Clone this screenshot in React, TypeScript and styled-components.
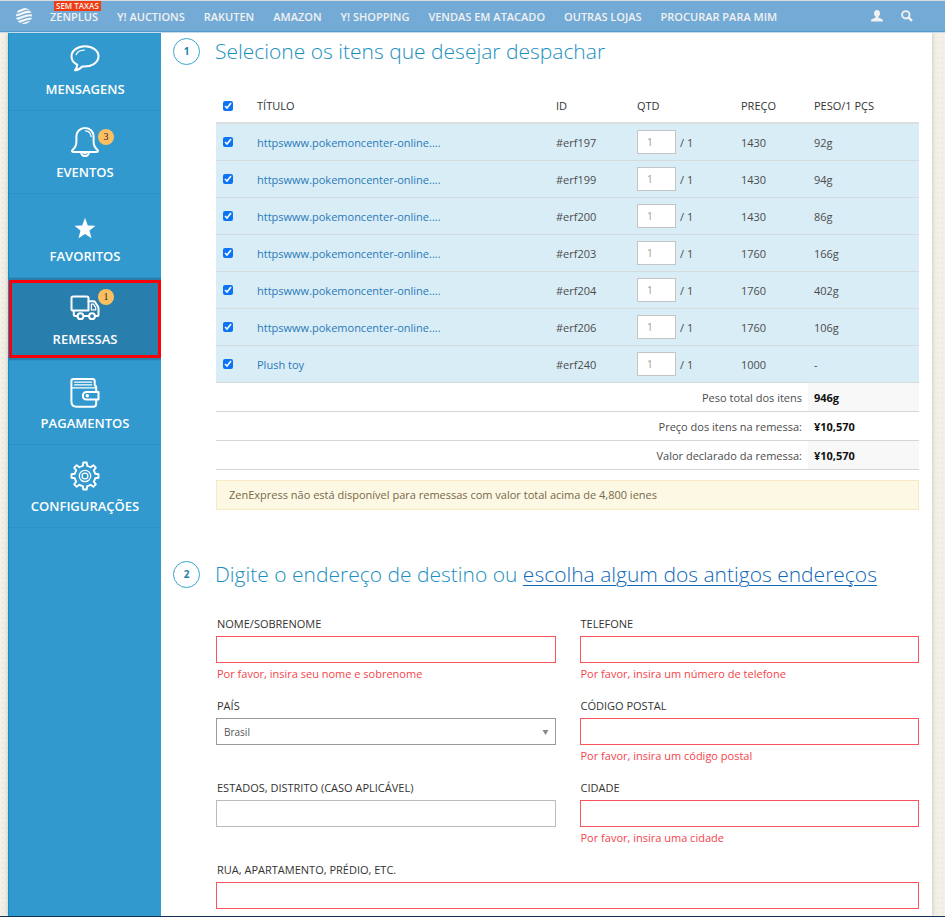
import React from 'react';
import styled, { createGlobalStyle } from 'styled-components';

const GlobalStyle = createGlobalStyle`
  *, *::before, *::after { box-sizing: border-box; }
  body {
    margin: 0;
    font-family: "Open Sans", "Noto Sans", sans-serif;
    font-size: 11px;
    color: #4c4c4c;
    background-color: #f3f0e8;
    background-image: radial-gradient(#ece8de 1px, transparent 1px);
    background-size: 5px 5px;
  }
  a { text-decoration: none; color: inherit; }
`;

const Page = styled.div`
  display: flex;
  flex-direction: column;
  min-height: 100vh;
  border-bottom: 1px solid #16365c;
`;

const TopBar = styled.header`
  position: relative;
  z-index: 2;
  display: flex;
  align-items: center;
  height: 32px;
  padding: 0 32px 0 16px;
  background: #74abd6;
  border-top: 1px solid #d9dadb;
  border-bottom: 1px solid #569acd;
  box-shadow: 0 1px 0 #c3dbee;
  color: #f1f1f1;
`;

const Logo = styled.a`
  display: flex;
  width: 34px;
`;

const TopLinks = styled.nav`
  display: flex;
  flex: 1;
  gap: 19px;
  padding-top: 2px;
  font-weight: 600;
  line-height: 12px;
  white-space: nowrap;
`;

const TopLink = styled.a`
  position: relative;
`;

const Ribbon = styled.span`
  position: absolute;
  top: -10px;
  left: 4px;
  padding: 0 2px;
  background: #f03c10;
  font-size: 8px;
  line-height: 10px;
`;

const IconButton = styled.button`
  display: flex;
  padding: 0;
  margin-left: 18px;
  border: 0;
  background: none;
  color: inherit;
`;

const Body = styled.div`
  display: flex;
  flex: 1;
  margin: 0 13px 0 8px;
  background: #fff;
  box-shadow: 0 0 5px rgba(0, 0, 0, 0.18);
`;

const Sidebar = styled.aside`
  flex: 0 0 153px;
  background: #3299cf;
  border-left: 1px solid #0b8fc8;
`;

const SideNav = styled.nav`
  display: grid;
  grid-auto-rows: 1fr;
  height: 501px;
  margin-top: -5px;
`;

const SideLink = styled.a<{ $active?: boolean }>`
  position: relative;
  display: flex;
  flex-direction: column;
  align-items: center;
  justify-content: flex-end;
  gap: 5px;
  padding-bottom: 11px;
  color: #fff;
  font-size: 13px;
  font-weight: 600;
  line-height: 20px;
  border-bottom: 1px solid #2e90c5;
  background: ${(p) => (p.$active ? '#287eac' : 'transparent')};
  &::after {
    content: '';
    display: ${(p) => (p.$active ? 'block' : 'none')};
    position: absolute;
    inset: 2px 0;
    border: 3px solid #fb0006;
  }
`;

const IconBox = styled.span`
  position: relative;
  display: flex;
  width: 30px;
  height: 30px;
`;

const Badge = styled.span<{ $raised?: boolean }>`
  position: absolute;
  top: ${(p) => (p.$raised ? -5 : 2)}px;
  left: 28px;
  width: 16px;
  height: 16px;
  border-radius: 50%;
  background: #fdbf62;
  color: #222;
  font: 10px/15px "Liberation Serif", serif;
  text-align: center;
`;

const Main = styled.main`
  flex: 1;
  min-width: 0;
  padding: 3px 13px 6px 12px;
`;

const Section = styled.section`
  padding-left: 43px;
`;

const SectionTitle = styled.h2`
  display: flex;
  align-items: center;
  margin: 0 0 0 -43px;
  color: #1a8fc0;
  font-size: 21px;
  font-weight: 300;
  line-height: 32px;
`;

const Step = styled.span`
  flex: none;
  width: 27px;
  height: 27px;
  margin-right: 15px;
  border: 1px solid #3aa3cc;
  border-radius: 50%;
  color: #1d7fae;
  font-size: 10px;
  font-weight: 700;
  line-height: 25px;
  text-align: center;
`;

const HeadingLink = styled.a`
  color: #0f68b8;
  text-decoration: underline;
  text-decoration-thickness: 1px;
  text-underline-offset: 3px;
`;

const ItemTable = styled.table`
  width: 100%;
  margin-top: 22px;
  border-collapse: separate;
  border-spacing: 0;
  table-layout: fixed;
  font-size: 11px;
`;

const HeadCell = styled.th<{ $width?: number }>`
  width: ${(p) => (p.$width ? `${p.$width}px` : 'auto')};
  height: 35px;
  padding: 0 6px;
  border-bottom: 2px solid #dcdfe0;
  color: #333;
  font-weight: 400;
  text-align: left;
`;

const Cell = styled.td`
  height: 37px;
  padding: 0 6px;
  border-bottom: 1px solid #d5dadd;
  background: #d9edf6;
  white-space: nowrap;
`;

const Check = styled.input`
  display: block;
  width: 10px;
  height: 10px;
  margin: 0 0 0 1px;
  accent-color: #0b74f5;
`;

const ItemLink = styled.a`
  color: #2a7ab8;
`;

const QuantityGroup = styled.div`
  display: flex;
  align-items: center;
  gap: 4px;
`;

const Quantity = styled.input`
  width: 39px;
  height: 24px;
  padding: 0 9px;
  border: 1px solid #c4c4c4;
  background: #fff;
  color: #999;
  font: 10px "Open Sans", sans-serif;
`;

const SumLabel = styled.td`
  height: 29px;
  padding: 0 6px;
  border-bottom: 1px solid #d6d6d6;
  text-align: right;
`;

const SumValue = styled.td<{ $shaded?: boolean }>`
  padding: 0 6px;
  border-bottom: 1px solid #d6d6d6;
  background: ${(p) => (p.$shaded ? '#f8f8f8' : 'transparent')};
  color: #111;
  font-weight: 700;
`;

const Notice = styled.p`
  margin: 10px 0 48px;
  padding: 5px 12px;
  border: 1px solid #f8e8c4;
  background: #fcf8e3;
  color: #77684a;
  line-height: 18px;
`;

const Form = styled.form`
  display: grid;
  grid-template-columns: 1fr 1fr;
  column-gap: 24px;
  margin-top: 25px;
`;

const Field = styled.div<{ $wide?: boolean }>`
  grid-column: ${(p) => (p.$wide ? '1 / -1' : 'auto')};
  min-height: ${(p) => (p.$wide ? 0 : 82)}px;
`;

const Label = styled.label`
  display: block;
  margin-bottom: 3px;
  padding-left: 1px;
  color: #333;
  line-height: 18px;
`;

const TextInput = styled.input<{ $invalid?: boolean }>`
  display: block;
  width: 100%;
  height: 27px;
  padding: 0 7px;
  border: 1px solid ${(p) => (p.$invalid ? '#f8555c' : '#bcbcbc')};
  background: #fff;
  font: 10px "Open Sans", sans-serif;
`;

const SelectWrap = styled.div`
  position: relative;
  svg {
    position: absolute;
    top: 12px;
    right: 7px;
    pointer-events: none;
  }
`;

const Select = styled.select`
  display: block;
  width: 100%;
  height: 27px;
  padding: 0 7px;
  appearance: none;
  border: 1px solid #999;
  border-radius: 0;
  background: #fff;
  color: #555;
  font: 10px "Open Sans", sans-serif;
`;

const ErrorText = styled.p`
  margin: 2px 0 0;
  padding-left: 1px;
  color: #f5434a;
  line-height: 18px;
`;

const LogoIcon = () => (
  <svg width="16" height="16" viewBox="0 0 16 16" aria-hidden="true">
    <defs>
      <clipPath id="globe"><circle cx="8" cy="8" r="8" /></clipPath>
    </defs>
    <g clipPath="url(#globe)" fill="none" stroke="#f4f6f8" strokeWidth="2.2">
      <path d="M-1 3.500C4 4.500 8-1 14 1" />
      <path d="M-1 7.200C5 8 9 1.500 17 4.200" />
      <path d="M-1 10.800C5 11.600 10 5 17 7.800" />
      <path d="M-1 14.300C6 15 10 8.600 17 11.300" />
      <path d="M4 17C8 17 11 12.600 17 14.600" />
    </g>
  </svg>
);

const UserIcon = () => (
  <svg width="12" height="12" viewBox="0 0 12 12" fill="currentColor" aria-hidden="true">
    <path d="M6 0C4 0 3 1.300 3 3.200c0 1.600.6 2.700 1.500 3.400v1C4 8.500.5 8.800.1 10.200V11.500h11.800v-1.300C11.500 8.800 8 8.500 7.500 7.600v-1C8.400 5.900 9 4.800 9 3.200 9 1.300 8 0 6 0Z" />
  </svg>
);

const SearchIcon = () => (
  <svg width="12" height="12" viewBox="0 0 12 12" fill="none" stroke="currentColor" aria-hidden="true">
    <circle cx="4.800" cy="4.800" r="3.700" strokeWidth="1.900" />
    <path d="m7.600 7.600 3.400 3.200" strokeWidth="2.400" />
  </svg>
);

const Glyph = ({ children }: { children: React.ReactNode }) => (
  <svg
    width="30"
    height="30"
    viewBox="0 0 30 30"
    fill="none"
    stroke="#fff"
    strokeWidth="2"
    strokeLinecap="round"
    strokeLinejoin="round"
    aria-hidden="true"
  >
    {children}
  </svg>
);

const MessageIcon = () => (
  <Glyph>
    <path d="M15 2.300C7.600 2.300 1.500 6.600 1.500 12.300c0 3.600 2.100 6.600 5.700 8.400C7.200 22.700 6.500 24.500 5 26.300c3-.4 5.500-1.700 7.200-3.800 9.200.8 16.300-3.900 16.300-10.200C28.500 6.600 22.400 2.300 15 2.300Z" />
    <path d="M6.200 10.700C7.200 8 10.400 6.300 14.200 6.200" strokeWidth="1.300" />
  </Glyph>
);

const BellIcon = () => (
  <Glyph>
    <path d="M15 1c-5.200 0-8.600 3.700-8.600 8.500v5.300c0 4-1.200 5.900-3.900 8.200-.9.900-.5 1.900.6 1.900h23.800c1.100 0 1.500-1 .6-1.900-2.700-2.300-3.900-4.200-3.900-8.200V9.500C23.600 4.700 20.200 1 15 1Z" />
    <path d="M11 25.200c.3 2.500 1.900 3.900 4 3.900s3.700-1.400 4-3.900M14 26h2" />
    <path d="M15.500 3.800c3.200.2 5.300 2.400 5.500 5.700" strokeWidth="1.300" />
  </Glyph>
);

const StarIcon = () => (
  <Glyph>
    <path
      d="m15 6.800 2.800 7.600 7.700.3-6 4.900 2 7.700-6.500-4.300-6.500 4.300 2-7.700-6-4.900 7.700-.3Z"
      fill="#fff"
      stroke="none"
    />
  </Glyph>
);

const TruckIcon = () => (
  <Glyph>
    <path d="M18.500 16.500H3.200c-1 0-1.700-.6-1.700-1.600V4.100c0-1 .7-1.700 1.700-1.700h13.600c1 0 1.700.7 1.700 1.700v12.400Z" />
    <path d="M18.500 7.200h4.700c.9 0 1.500.3 2 1l2.700 4.200c.4.600.6 1.100.6 1.800v6.300c0 1-.6 1.600-1.600 1.600h-1.600M18.800 22.100H14M7 22.100H5.200c-.9 0-1.400-.6-1.400-1.400v-4" />
    <path d="M21.400 10.200v5.700h4.300v-2.300l-2.300-3.400Z" strokeWidth="1.300" />
    <circle cx="10.500" cy="22.200" r="2.900" />
    <circle cx="22" cy="22.200" r="2.900" />
  </Glyph>
);

const WalletIcon = () => (
  <Glyph>
    <path d="M26.200 13.500V9.300c0-1-.5-1.700-1.500-2V3.200c0-1.300-.8-2.100-2.100-2.100H3.700c-1.400 0-2.300.8-2.300 2.200v20.200c0 3.200 2 5.200 5.200 5.200h16.700c1.900 0 2.900-1.200 2.900-2.900v-3.600" />
    <path d="M28.500 14v7.500H16.800c-2.300 0-3.900-1.600-3.900-3.800S14.500 14 16.800 14Z" />
    <path d="M2 9.800h23.500M4.500 4.100h17.200M4.500 6.800h17.200" strokeWidth="1.200" />
    <circle cx="17.300" cy="17.800" r="1" fill="#fff" strokeWidth="1.400" />
  </Glyph>
);

const GearIcon = () => (
  <Glyph>
    <path
      d="M12.800 4.800 13.300 1.500h3.400l.5 3.300c1.200.3 2.300.7 3.400 1.400l2.700-2 2.500 2.500-2 2.700c.7 1.100 1.100 2.200 1.400 3.400l3.300.5v3.400l-3.300.5c-.3 1.200-.7 2.300-1.400 3.400l2 2.700-2.500 2.500-2.700-2c-1.100.7-2.200 1.100-3.400 1.400l-.5 3.300h-3.400l-.5-3.300c-1.200-.3-2.300-.7-3.400-1.400l-2.700 2-2.500-2.500 2-2.700c-.7-1.100-1.100-2.200-1.400-3.400l-3.300-.5v-3.400l3.300-.5c.3-1.200.7-2.300 1.400-3.400l-2-2.700 2.500-2.500 2.700 2c1.100-.7 2.200-1.100 3.400-1.400Z"
      strokeWidth="1.900"
    />
    <circle cx="15" cy="15" r="5.700" strokeWidth="1.200" />
    <circle cx="15" cy="15" r="2.900" strokeWidth="1.300" />
  </Glyph>
);

const topLinks = ['ZENPLUS', 'Y! AUCTIONS', 'RAKUTEN', 'AMAZON', 'Y! SHOPPING', 'VENDAS EM ATACADO', 'OUTRAS LOJAS', 'PROCURAR PARA MIM'];

const sideLinks = [
  { label: 'MENSAGENS', Icon: MessageIcon },
  { label: 'EVENTOS', Icon: BellIcon, badge: '3' },
  { label: 'FAVORITOS', Icon: StarIcon },
  { label: 'REMESSAS', Icon: TruckIcon, badge: '1', active: true },
  { label: 'PAGAMENTOS', Icon: WalletIcon },
  { label: 'CONFIGURAÇÕES', Icon: GearIcon },
];

const shopTitle = 'httpswww.pokemoncenter-online....';
const items = [
  { title: shopTitle, id: '#erf197', price: '1430', weight: '92g' },
  { title: shopTitle, id: '#erf199', price: '1430', weight: '94g' },
  { title: shopTitle, id: '#erf200', price: '1430', weight: '86g' },
  { title: shopTitle, id: '#erf203', price: '1760', weight: '166g' },
  { title: shopTitle, id: '#erf204', price: '1760', weight: '402g' },
  { title: shopTitle, id: '#erf206', price: '1760', weight: '106g' },
  { title: 'Plush toy', id: '#erf240', price: '1000', weight: '-' },
];

const totals = [
  { label: 'Peso total dos itens', value: '946g', shaded: true },
  { label: 'Preço dos itens na remessa:', value: '¥10,570', shaded: false },
  { label: 'Valor declarado da remessa:', value: '¥10,570', shaded: true },
];

type TextFieldProps = { id: string; label: string; error?: string; invalid?: boolean; wide?: boolean };

const TextField = ({ id, label, error, invalid, wide }: TextFieldProps) => (
  <Field $wide={wide}>
    <Label htmlFor={id}>{label}</Label>
    <TextInput id={id} type="text" $invalid={invalid || !!error} aria-invalid={invalid || !!error} />
    {error && <ErrorText>{error}</ErrorText>}
  </Field>
);

export default function App() {
  return (
    <>
      <GlobalStyle />
      <Page>
        <TopBar>
          <Logo href="#" aria-label="Início"><LogoIcon /></Logo>
          <TopLinks>
            {topLinks.map((text, i) => (
              <TopLink href="#" key={text}>
                {i === 0 && <Ribbon>SEM TAXAS</Ribbon>}
                {text}
              </TopLink>
            ))}
          </TopLinks>
          <IconButton type="button" aria-label="Conta"><UserIcon /></IconButton>
          <IconButton type="button" aria-label="Buscar"><SearchIcon /></IconButton>
        </TopBar>
        <Body>
          <Sidebar>
            <SideNav>
              {sideLinks.map(({ label, Icon, badge, active }) => (
                <SideLink href="#" key={label} $active={active}>
                  <IconBox>
                    <Icon />
                    {badge && <Badge $raised={active}>{badge}</Badge>}
                  </IconBox>
                  {label}
                </SideLink>
              ))}
            </SideNav>
          </Sidebar>
          <Main>
            <Section>
              <SectionTitle><Step>1</Step><span>Selecione os itens que desejar despachar</span></SectionTitle>
              <ItemTable>
                <thead>
                  <tr>
                    <HeadCell $width={35}><Check type="checkbox" defaultChecked aria-label="Selecionar todos" /></HeadCell>
                    <HeadCell>TÍTULO</HeadCell>
                    <HeadCell $width={81}>ID</HeadCell>
                    <HeadCell $width={104}>QTD</HeadCell>
                    <HeadCell $width={73}>PREÇO</HeadCell>
                    <HeadCell $width={111}>PESO/1 PÇS</HeadCell>
                  </tr>
                </thead>
                <tbody>
                  {items.map((item) => (
                    <tr key={item.id}>
                      <Cell><Check type="checkbox" defaultChecked aria-label={item.id} /></Cell>
                      <Cell><ItemLink href="#">{item.title}</ItemLink></Cell>
                      <Cell>{item.id}</Cell>
                      <Cell>
                        <QuantityGroup>
                          <Quantity type="text" defaultValue="1" aria-label={`Quantidade ${item.id}`} />
                          <span>/ 1</span>
                        </QuantityGroup>
                      </Cell>
                      <Cell>{item.price}</Cell>
                      <Cell>{item.weight}</Cell>
                    </tr>
                  ))}
                </tbody>
                <tfoot>
                  {totals.map((t) => (
                    <tr key={t.label}>
                      <SumLabel colSpan={5}>{t.label}</SumLabel>
                      <SumValue $shaded={t.shaded}>{t.value}</SumValue>
                    </tr>
                  ))}
                </tfoot>
              </ItemTable>
              <Notice>ZenExpress não está disponível para remessas com valor total acima de 4,800 ienes</Notice>
            </Section>
            <Section>
              <SectionTitle>
                <Step>2</Step>
                <span>Digite o endereço de destino ou <HeadingLink href="#">escolha algum dos antigos endereços</HeadingLink></span>
              </SectionTitle>
              <Form>
                <TextField id="name" label="NOME/SOBRENOME" error="Por favor, insira seu nome e sobrenome" />
                <TextField id="phone" label="TELEFONE" error="Por favor, insira um número de telefone" />
                <Field>
                  <Label htmlFor="country">PAÍS</Label>
                  <SelectWrap>
                    <Select id="country" defaultValue="Brasil"><option>Brasil</option></Select>
                    <svg width="7" height="5" viewBox="0 0 7 5" aria-hidden="true"><path d="M0.500 0h6L3.500 5Z" fill="#888" /></svg>
                  </SelectWrap>
                </Field>
                <TextField id="zip" label="CÓDIGO POSTAL" error="Por favor, insira um código postal" />
                <TextField id="state" label="ESTADOS, DISTRITO (CASO APLICÁVEL)" />
                <TextField id="city" label="CIDADE" error="Por favor, insira uma cidade" />
                <TextField id="street" label="RUA, APARTAMENTO, PRÉDIO, ETC." invalid wide />
              </Form>
            </Section>
          </Main>
        </Body>
      </Page>
    </>
  );
}
